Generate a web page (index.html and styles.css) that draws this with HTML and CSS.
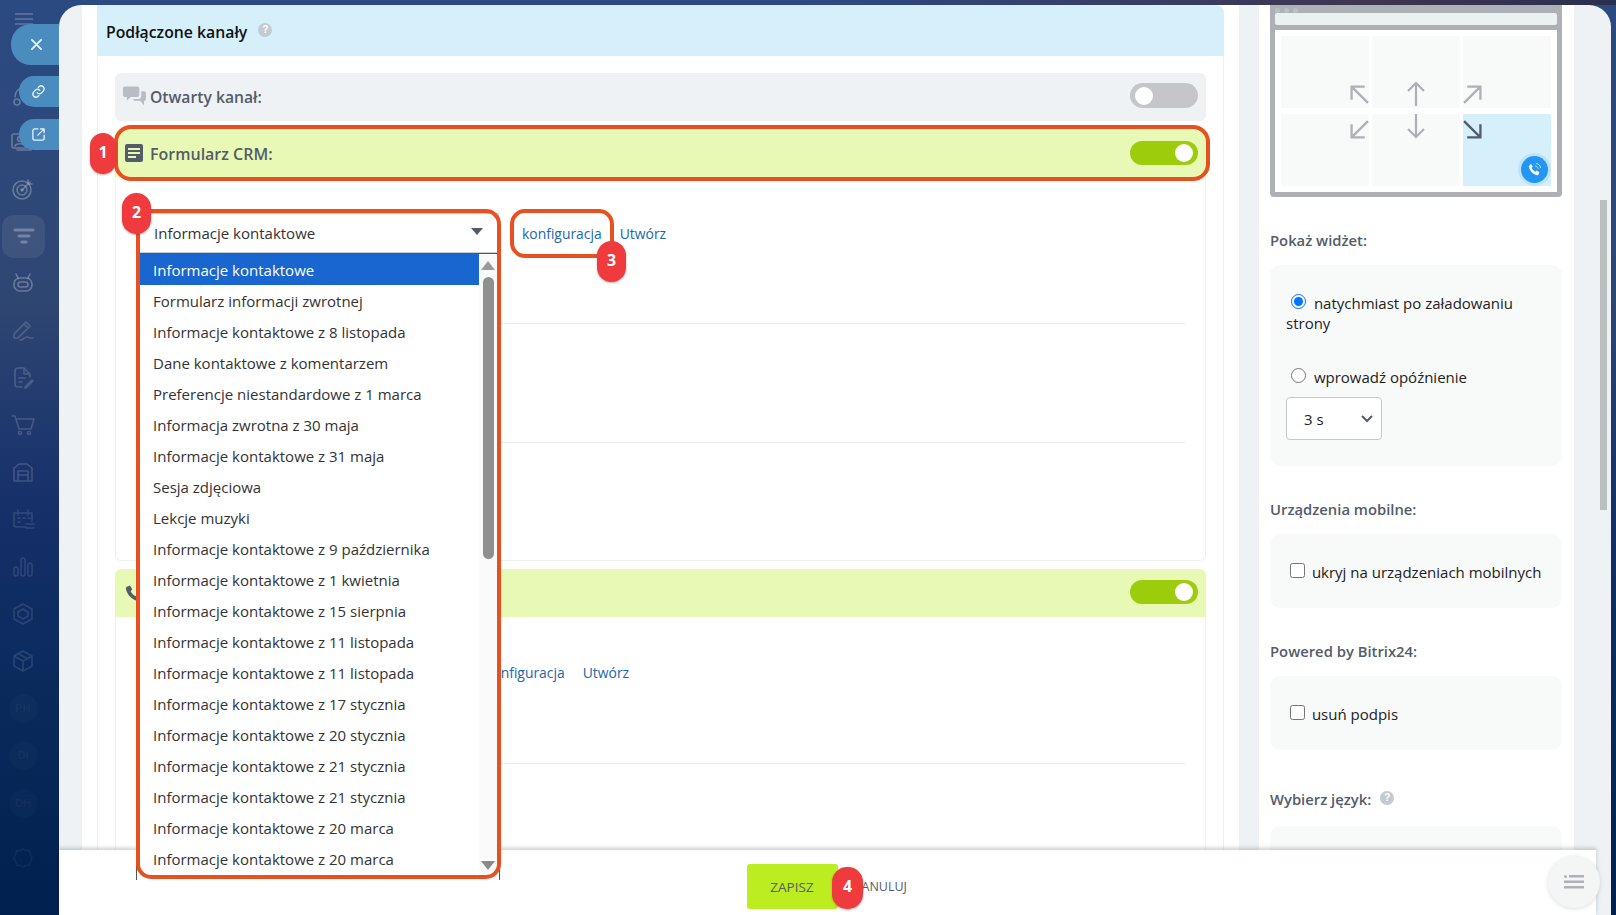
FILE: index.html
```html
<!DOCTYPE html>
<html lang="pl">
<head>
<meta charset="utf-8">
<title>Podłączone kanały</title>
<link rel="stylesheet" href="styles.css">
</head>
<body>
<div class="app">
  <nav class="sidebar">
    <svg class="ham" viewBox="0 0 18 12"><path d="M0 1h18M0 6h18M0 11h18"/></svg>
    <ul class="nav-list">
      <li class="lvl1"><svg viewBox="0 0 24 24"><circle cx="6" cy="19" r="3"/><circle cx="18" cy="19" r="3"/><path d="M4 14c0-6 4-9 8-9s8 3 8 9"/></svg></li>
      <li class="lvl1"><svg viewBox="0 0 24 24"><rect x="1" y="4" width="16" height="14" rx="2"/><circle cx="9" cy="9" r="2.5"/><path d="M4 16c1-3 9-3 10 0M20 8v12H6"/></svg></li>
      <li class="lvl1"><svg viewBox="0 0 24 24"><circle cx="11" cy="13" r="9"/><circle cx="11" cy="13" r="5"/><circle cx="11" cy="13" r="1"/><path d="M11 13l8-8M17 3v4h4"/></svg></li>
      <li class="lvl1 active"><svg viewBox="0 0 24 24"><path class="thick" d="M3 6h18M7 12h10M10 18h4"/></svg></li>
      <li class="lvl1"><svg viewBox="0 0 24 24"><rect x="3" y="7" width="18" height="13" rx="6"/><path d="M7 7L5 3M17 7l2-4"/><rect x="7" y="11" width="10" height="5" rx="2.5"/></svg></li>
      <li class="lvl2"><svg viewBox="0 0 24 24"><path d="M3 16L15 4l4 4L7 20H3zM13 6l4 4M9 22c4 0 4-3 7-3s2 2 6 1"/></svg></li>
      <li class="lvl2"><svg viewBox="0 0 24 24"><path d="M11 21H7a3 3 0 0 1-3-3V5a3 3 0 0 1 3-3h6l6 6v3M13 2v6h6M8 12h6M8 16h3M14 21l7-7 1 1-7 7h-1z"/></svg></li>
      <li class="lvl2"><svg viewBox="0 0 24 24"><path d="M1 3h3l4 13h12l3-10H5"/><circle cx="9" cy="20" r="1.5"/><circle cx="18" cy="20" r="1.5"/></svg></li>
      <li class="lvl2"><svg viewBox="0 0 24 24"><path d="M3 21V8l5-4h8l5 4v13zM7 21V11h10v10M7 15h10"/></svg></li>
      <li class="lvl3"><svg viewBox="0 0 24 24"><path d="M15 20H5a2 2 0 0 1-2-2V6h18v8M7 3v5M17 3v5M7 11h2M12 11h2M17 11h2M7 15h2M15 17h8M15 21h8"/></svg></li>
      <li class="lvl3"><svg viewBox="0 0 24 24"><rect x="3" y="12" width="4" height="9" rx="2"/><rect x="10" y="3" width="4" height="18" rx="2"/><rect x="17" y="8" width="4" height="13" rx="2"/></svg></li>
      <li class="lvl3"><svg viewBox="0 0 24 24"><path d="M12 2l9 5v10l-9 5-9-5V7z"/><path d="M12 7l5 3v4l-5 3-5-3v-4z"/></svg></li>
      <li class="lvl3"><svg viewBox="0 0 24 24"><path d="M12 2l9 5v10l-9 5-9-5V7zM3 7l9 5 9-5M12 12v10M7 4.500l9 5"/></svg></li>
      <li class="lvl4"><span class="avatar">PH</span></li>
      <li class="lvl4"><span class="avatar">DI</span></li>
      <li class="lvl4"><span class="avatar">DH</span></li>
    </ul>
    <svg class="gear lvl4" viewBox="0 0 24 24"><path d="M12 2l3 2 4 0 1 4 2 4-2 4-1 4-4 0-3 2-3-2-4 0-1-4-2-4 2-4 1-4 4 0z"/></svg>
  </nav>

  <div class="slider">
    <div class="slider-body">
      <main class="main-col">
        <div class="section-head">
          <h2 class="section-title">Podłączone kanały</h2>
          <span class="help">?</span>
        </div>
        <div class="section-body">
          <div class="channel channel-off">
            <svg class="ch-icon" viewBox="0 0 24 20"><path d="M2 0h13a2 2 0 0 1 2 2v7a2 2 0 0 1-2 2H8l-4 4v-4H2a2 2 0 0 1-2-2V2a2 2 0 0 1 2-2z"/><path d="M19 5h3a2 2 0 0 1 2 2v6a2 2 0 0 1-2 2v5l-4-5h-6l-2-2h6a3 3 0 0 0 3-3z"/></svg>
            <span class="ch-name">Otwarty kanał:</span>
            <span class="toggle toggle-off"></span>
          </div>
          <div class="channel channel-on">
            <svg class="ch-icon ch-icon-dark" viewBox="0 0 18 18"><path fill-rule="evenodd" d="M2 0h14a2 2 0 0 1 2 2v14a2 2 0 0 1-2 2H2a2 2 0 0 1-2-2V2a2 2 0 0 1 2-2zM3 4v2h12V4zM3 8v2h12V8zM3 12v2h8v-2z"/></svg>
            <span class="ch-name ch-name-form">Formularz CRM:</span>
            <span class="toggle toggle-on"></span>
          </div>
          <div class="channel-panel panel-crm">
            <div class="select-row">
              <div class="fake-select select-wide"><span>Informacje kontaktowe</span><i class="caret"></i></div>
              <a class="link">konfiguracja</a>
              <a class="link">Utwórz</a>
            </div>
            <hr class="divider divider-a">
            <hr class="divider divider-b">
          </div>
          <div class="channel channel-on">
            <svg class="ch-icon ch-icon-dark" viewBox="0 0 24 24"><path d="M6.600 2l3 5-2 2.500c1 2.500 4 5.500 6.900 6.900L17 14.400l5 3-1.500 4c-.5 1-1.500 1.600-3 1.300C9.500 21 3 14.500 1.300 6.500 1 5 1.600 4 2.600 3.500z"/></svg>
            <span class="toggle toggle-on toggle-second"></span>
          </div>
          <div class="channel-panel panel-phone">
            <div class="select-row">
              <div class="fake-select select-narrow"></div>
              <a class="link">konfiguracja</a>
              <a class="link">Utwórz</a>
            </div>
            <hr class="divider divider-c">
          </div>
        </div>
      </main>

      <aside class="side-col">
        <div class="preview">
          <div class="preview-top">
            <div class="dots"><i></i><i></i><i></i></div>
            <div class="urlbar"></div>
          </div>
          <div class="preview-grid">
            <div class="cell cell-br"><svg viewBox="0 0 18 18"><path d="M17 17L2 2M1.500 14V1.500H14"/></svg></div>
            <div class="cell cell-bc"><svg class="tall" viewBox="0 0 18 25"><path d="M9 25V2M1 10l8-8 8 8"/></svg></div>
            <div class="cell cell-bl"><svg viewBox="0 0 18 18"><path d="M1 17L16 2M4 1.500h12.500V14"/></svg></div>
            <div class="cell cell-tr"><svg viewBox="0 0 18 18"><path d="M17 1L2 16M1.500 4v12.500H14"/></svg></div>
            <div class="cell cell-tc"><svg class="tall" viewBox="0 0 18 25"><path d="M9 0v23M1 15l8 8 8-8"/></svg></div>
            <div class="cell cell-tl cell-active"><svg viewBox="0 0 18 18"><path d="M1 1l15 15M4 16.500h12.500V4"/></svg>
              <span class="call-btn"><svg viewBox="0 0 24 24"><path d="M7 4l2.500 4-1.600 2c.8 2 3 4.200 5.100 5.100l2-1.600 4 2.500-1.200 3c-.4.800-1.200 1.200-2.300 1C10 18.600 5.400 14 4 8.500c-.2-1.100.2-1.900 1-2.300z"/><path class="waves" d="M13 7c2 0 4 2 4 4M14 3.500c3.500 0 6.500 3 6.500 6.500"/></svg></span>
            </div>
          </div>
        </div>

        <h3 class="opt-label label-first">Pokaż widżet:</h3>
        <div class="opt-panel panel-show">
          <label class="radio-line"><input type="radio" name="show" checked> natychmiast po załadowaniu strony</label>
          <label class="radio-line radio-second"><input type="radio" name="show"> wprowadź opóźnienie</label>
          <div class="delay-select"><span>3 s</span><svg viewBox="0 0 12 8"><path d="M1 1l5 5 5-5"/></svg></div>
        </div>

        <h3 class="opt-label">Urządzenia mobilne:</h3>
        <div class="opt-panel panel-check">
          <label class="check-line"><input type="checkbox"> ukryj na urządzeniach mobilnych</label>
        </div>

        <h3 class="opt-label">Powered by Bitrix24:</h3>
        <div class="opt-panel panel-check">
          <label class="check-line"><input type="checkbox"> usuń podpis</label>
        </div>

        <h3 class="opt-label label-lang">Wybierz język: <span class="help help-lang">?</span></h3>
        <div class="opt-panel panel-lang"></div>
      </aside>
    </div>

    <div class="page-scroll"></div>

    <footer class="footer">
      <button class="btn-save">ZAPISZ</button>
      <button class="btn-cancel">ANULUJ</button>
    </footer>
    <button class="fab"><svg viewBox="0 0 20 14"><circle cx="1.500" cy="1.500" r="1.500"/><path d="M5 0h15v2.500H5zM0 5.500h20V8H0zM0 11h20v2.500H0z"/></svg></button>
  </div>
</div>

<div class="pill pill-close"><svg viewBox="0 0 12 12"><path d="M1 1l10 10M11 1L1 11"/></svg></div>
<div class="pill pill-link"><svg viewBox="0 0 24 24"><path d="M10 14a5 5 0 0 0 7 0l3-3a5 5 0 0 0-7-7l-1.500 1.500M14 10a5 5 0 0 0-7 0l-3 3a5 5 0 0 0 7 7l1.500-1.500"/></svg></div>
<div class="pill pill-open"><svg viewBox="0 0 24 24"><path d="M11 3H6a3 3 0 0 0-3 3v12a3 3 0 0 0 3 3h12a3 3 0 0 0 3-3v-5M15 3h6v6M21 3L11 13"/></svg></div>

<div class="dropdown">
  <ul class="dropdown-list">
    <li class="selected">Informacje kontaktowe</li>
    <li>Formularz informacji zwrotnej</li>
    <li>Informacje kontaktowe z 8 listopada</li>
    <li>Dane kontaktowe z komentarzem</li>
    <li>Preferencje niestandardowe z 1 marca</li>
    <li>Informacja zwrotna z 30 maja</li>
    <li>Informacje kontaktowe z 31 maja</li>
    <li>Sesja zdjęciowa</li>
    <li>Lekcje muzyki</li>
    <li>Informacje kontaktowe z 9 października</li>
    <li>Informacje kontaktowe z 1 kwietnia</li>
    <li>Informacje kontaktowe z 15 sierpnia</li>
    <li>Informacje kontaktowe z 11 listopada</li>
    <li>Informacje kontaktowe z 11 listopada</li>
    <li>Informacje kontaktowe z 17 stycznia</li>
    <li>Informacje kontaktowe z 20 stycznia</li>
    <li>Informacje kontaktowe z 21 stycznia</li>
    <li>Informacje kontaktowe z 21 stycznia</li>
    <li>Informacje kontaktowe z 20 marca</li>
    <li>Informacje kontaktowe z 20 marca</li>
  </ul>
  <div class="dd-scroll">
    <i class="dd-up"></i>
    <i class="dd-thumb"></i>
    <i class="dd-down"></i>
  </div>
</div>

<div class="mark mark-1"></div>
<div class="mark mark-2"></div>
<div class="mark mark-3"></div>
<div class="badge badge-1">1</div>
<div class="badge badge-2">2</div>
<div class="badge badge-3">3</div>
<div class="badge badge-4">4</div>
</body>
</html>
```

FILE: styles.css
```css
* { box-sizing: border-box; }
html, body { height: 100%; }
body {
  margin: 0;
  position: relative;
  overflow: hidden;
  font-family: "Open Sans", "Noto Sans", sans-serif;
  font-size: 15px;
  color: #333;
  background: #00214f;
}
.app {
  display: flex;
  height: 915px;
  padding-right: 5px;
  background:
    linear-gradient(90deg, rgba(0,0,0,0) 50%, #3f3550 85%, #2a2f50 100%) top / 100% 5px no-repeat,
    linear-gradient(180deg, #2b4a82 0, #2f4672 33%, #16306a 55%, #0a2a5c 75%, #00214f 100%);
}

/* Sidebar */
.sidebar {
  width: 59px;
  flex: none;
  display: flex;
  flex-direction: column;
  color: #fff;
}
.sidebar svg { fill: none; stroke: currentColor; stroke-width: 1.6; stroke-linecap: round; stroke-linejoin: round; }
.ham { width: 18px; height: 12px; margin: 13px 0 0 15px; opacity: .25; }
.nav-list {
  list-style: none;
  margin: 46px 0 0;
  padding: 0;
}
.nav-list li {
  width: 46px;
  height: 47.3px;
  display: flex;
  align-items: center;
  justify-content: center;
}
.nav-list svg { width: 24px; height: 24px; }
.lvl1 { color: rgba(255,255,255,.28); }
.lvl2 { color: rgba(255,255,255,.17); }
.lvl3 { color: rgba(255,255,255,.12); }
.lvl4 { color: rgba(255,255,255,.05); }
.nav-list li.active {
  background: rgba(255,255,255,.08);
  border-radius: 12px;
  margin-left: 2px;
  width: 43px;
  height: 43px;
  margin-top: 2px;
  margin-bottom: 1.4px;
}
.thick { stroke-width: 3; }
.avatar {
  width: 29px;
  height: 29px;
  border-radius: 50%;
  background: rgba(255,255,255,.02);
  font: bold 11px/29px "Liberation Sans", sans-serif;
  text-align: center;
}
.gear { width: 22px; height: 22px; margin: 20px 0 0 12px; }

/* Slider */
.slider {
  flex: 1;
  margin-top: 5px;
  position: relative;
  background: #eef2f4;
  border-radius: 22px 22px 0 0;
  overflow: hidden;
}
.slider-body {
  display: flex;
  gap: 20px;
  padding-left: 23px;
  align-items: flex-start;
}
.main-col {
  width: 1157px;
  height: 910px;
  flex: none;
  background: #fff;
  padding: 0 15px;
}
.section-head {
  height: 51px;
  background: #d5f0fb;
  border-radius: 0 8px 0 0;
  padding-left: 9px;
  display: flex;
  align-items: center;
  gap: 11px;
}
.section-title {
  margin: 2px 0 0;
  font-size: 15.8px;
  font-weight: 600;
  color: #111;
}
.help {
  width: 14px;
  height: 14px;
  border-radius: 50%;
  background: #c3cad0;
  color: #fff;
  font: bold 10px/14px "Liberation Sans", sans-serif;
  text-align: center;
  margin-top: -2px;
}
.section-body {
  height: 859px;
  border: 1px solid #eef0f2;
  border-width: 0 1px;
  padding: 17px 17px 0;
}
.channel {
  height: 48px;
  display: flex;
  align-items: center;
  padding: 0 8px 0 10px;
  border-radius: 6px;
}
.channel-off { background: #eef2f4; margin-bottom: 8px; }
.channel-on { background: #e8f8b5; border-radius: 6px 6px 0 0; }
.ch-icon { width: 23px; height: 20px; fill: #b9bdc3; flex: none; margin: -2px 2px 0 -2px; }
.ch-icon-dark { width: 18px; height: 18px; fill: #535c69; margin: 0 3px 0 0; }
.ch-name {
  font-size: 15.7px;
  font-weight: 600;
  color: #535c69;
  margin-left: 2px;
}
.ch-name-form { font-size: 16px; margin: 2px 0 0 4px; }
.toggle {
  margin-left: auto;
  width: 68px;
  border-radius: 13px;
  position: relative;
}
.toggle::after {
  content: "";
  position: absolute;
  top: 4px;
  width: 18px;
  height: 18px;
  border-radius: 50%;
  background: #fff;
}
.toggle-off { height: 25px; background: #c4c6ca; margin-top: -4px; }
.toggle-off::after { left: 5px; }
.toggle-on { height: 24px; background: #9dcc0c; }
.toggle-on::after { right: 5px; top: 3px; }
.toggle-second { margin-top: -3px; }
.channel-panel {
  border: 1px solid #eef0f2;
  border-top: 0;
  border-radius: 0 0 6px 6px;
  padding: 36px 20px 0 23px;
  margin-bottom: 8px;
}
.panel-crm { height: 384px; }
.panel-phone { height: 400px; padding-top: 35px; }
.select-row {
  display: flex;
  align-items: center;
  gap: 18px;
  height: 40px;
}
.fake-select {
  height: 40px;
  border: 1px solid #c6cdd3;
  display: flex;
  align-items: center;
  justify-content: space-between;
  padding: 0 15px 0 14px;
  margin-right: 5px;
  color: #333;
}
.select-wide { width: 360px; }
.select-narrow { width: 323px; }
.caret {
  border: 6px solid transparent;
  border-top: 7px solid #535c69;
  border-bottom: 0;
  margin-top: -3px;
}
.link { color: #2067b0; font-size: 13.9px; }
.divider { border: 0; border-top: 1px solid #e8eaec; margin: 0; }
.divider-a { margin-top: 70px; }
.divider-b { margin-top: 118px; }
.divider-c { margin-top: 71px; }

/* Right column */
.side-col {
  width: 315px;
  height: 910px;
  flex: none;
  background: #fff;
  padding: 0 12px 0 11px;
}
.preview {
  height: 192px;
  background: #adb0b5;
  border-radius: 0 0 4px 4px;
  padding: 0 5px 6px;
  display: flex;
  flex-direction: column;
}
.preview-top { height: 25px; flex: none; }
.dots { display: flex; gap: 4px; height: 8px; padding: 3px 0 0 0; }
.dots i { width: 5px; height: 5px; border-radius: 50%; background: #bcc0c3; }
.urlbar { height: 12px; background: #edf0f0; border-radius: 2px; }
.preview-grid {
  flex: 1;
  background: #fff;
  padding: 6px;
  display: grid;
  grid-template-columns: repeat(3, 88px);
  grid-template-rows: 72px 72px;
  column-gap: 3px;
  row-gap: 6px;
}
.cell {
  background: #f8f9f9;
  display: flex;
  position: relative;
}
.cell svg { width: 19px; height: 19px; fill: none; stroke: #adb0b5; stroke-width: 2.2; }
.cell svg.tall { width: 18px; height: 25px; }
.cell-br { align-items: flex-end; justify-content: flex-end; }
.cell-bc { align-items: flex-end; justify-content: center; padding-bottom: 2px; }
.cell-bl { align-items: flex-end; justify-content: flex-start; }
.cell-tr { align-items: flex-start; justify-content: flex-end; padding-top: 6px; }
.cell-tc { align-items: flex-start; justify-content: center; }
.cell-tl { align-items: flex-start; justify-content: flex-start; padding-top: 6px; }
.cell-br, .cell-bl { padding-bottom: 4px; }
.cell-active { background: #d5f0fb; }
.cell-active > svg { stroke: #535c69; }
.call-btn {
  position: absolute;
  right: 3px;
  bottom: 3px;
  width: 27px;
  height: 27px;
  border-radius: 50%;
  background: #2196f3;
  box-shadow: 0 0 0 3px #bfe3f8;
  display: flex;
  align-items: center;
  justify-content: center;
}
.cell .call-btn svg { width: 17px; height: 17px; fill: #fff; stroke: none; }
.cell .call-btn .waves { fill: none; stroke: #fff; stroke-width: 1; }
.opt-label {
  margin: 33px 0 15px;
  font-size: 14.8px;
  line-height: 20px;
  font-weight: 600;
  color: #535c69;
}
.label-lang { margin: 39px 0 17px; display: flex; align-items: center; gap: 9px; }
.help-lang { margin-top: -2px; }
.opt-panel {
  background: #f8f9f9;
  border-radius: 10px;
  color: #222;
}
.panel-show { height: 201px; padding: 28px 16px 0; }
.radio-line { display: block; line-height: 20px; }
.radio-line input {
  width: 15px;
  height: 15px;
  margin: 0 4px 0 5px;
  vertical-align: 0;
}
.radio-second { margin-top: 34px; }
.delay-select {
  width: 96px;
  height: 43px;
  margin-top: 10px;
  background: #fff;
  border: 1px solid #c6c9cc;
  border-radius: 4px;
  padding: 0 8px 0 17px;
  display: flex;
  align-items: center;
  justify-content: space-between;
}
.delay-select svg { width: 12px; height: 8px; fill: none; stroke: #535c69; stroke-width: 2; }
.panel-check {
  height: 74px;
  padding-left: 20px;
  display: flex;
  align-items: center;
}
.check-line { line-height: 22px; margin-top: 1px; }
.check-line input { width: 15px; height: 15px; margin: 0 3px 0 0; vertical-align: 0; }
.panel-lang { height: 100px; }

.page-scroll {
  position: absolute;
  right: 4px;
  top: 195px;
  width: 7px;
  height: 310px;
  background: #bcbfc0;
}

/* Footer */
.footer {
  position: absolute;
  left: 0;
  right: 15px;
  bottom: 0;
  height: 65px;
  background: #fff;
  box-shadow: 0 -2px 4px rgba(80,90,100,.3);
  display: flex;
  align-items: center;
  justify-content: center;
  gap: 24px;
  padding: 8px 2px 0 0;
}
.btn-save, .btn-cancel {
  border: 0;
  font-family: "Open Sans", sans-serif;
  font-size: 13.5px;
  color: #535c69;
  padding: 0;
}
.btn-save {
  width: 91px;
  height: 45px;
  background: #bbed21;
  border-radius: 3px;
}
.btn-cancel { background: none; width: 45px; font-size: 12.5px; }
.fab {
  position: absolute;
  left: 1489px;
  top: 851px;
  width: 52px;
  height: 52px;
  border: 0;
  border-radius: 50%;
  background: #f4f5f5;
  box-shadow: 0 1px 4px rgba(80,90,100,.2);
  display: flex;
  align-items: center;
  justify-content: center;
}
.fab svg { width: 20px; height: 14px; fill: #aeb2b8; }

/* Overlay pills */
.pill {
  position: absolute;
  left: 19px;
  width: 40px;
  height: 31px;
  background: #4b8cc0;
  border-radius: 15px 0 0 15px;
  display: flex;
  align-items: center;
  justify-content: center;
}
.pill svg { width: 15px; height: 15px; fill: none; stroke: #fff; stroke-width: 2; stroke-linecap: round; stroke-linejoin: round; opacity: .9; }
.pill-close { left: 11px; top: 24px; width: 48px; height: 41px; border-radius: 20px 0 0 20px; padding-left: 3px; background: #4b8cbf; }
.pill-close svg { width: 11px; height: 11px; }
.pill-link { top: 76px; padding-right: 2px; }
.pill-open { top: 119px; padding-right: 2px; }

/* Dropdown */
.dropdown {
  position: absolute;
  left: 136px;
  top: 253px;
  width: 364px;
  height: 627px;
  background: #fff;
  border: 1px solid #555;
  border-width: 1px 1px 0;
  overflow: hidden;
}
.dropdown-list {
  list-style: none;
  margin: 0;
  padding: 0 0 0 3px;
  width: 343px;
}
.dropdown-list li {
  height: 31px;
  line-height: 32px;
  padding-left: 13px;
  color: #333;
  white-space: nowrap;
}
.dropdown-list .selected { background: #1a66d0; color: #fff; }
.dd-scroll {
  position: absolute;
  top: 0;
  right: 2px;
  bottom: 0;
  width: 18px;
  background: #fafafa;
}
.dd-up, .dd-down, .dd-thumb { position: absolute; display: block; }
.dd-up { left: 2px; top: 7px; border: 7px solid transparent; border-bottom: 9px solid #9a9a9a; border-top: 0; }
.dd-down { left: 2px; bottom: 10px; border: 7px solid transparent; border-top: 9px solid #8a8a8a; border-bottom: 0; }
.dd-thumb { left: 4px; top: 23px; width: 11px; height: 282px; border-radius: 6px; background: #8f8f8f; }

/* Annotations */
.mark {
  position: absolute;
  border: 4px solid #e8501f;
  border-radius: 15px;
}
.mark-1 { left: 114px; top: 125px; width: 1096px; height: 56px; border-radius: 17px; }
.mark-2 { left: 136px; top: 209px; width: 365px; height: 670px; }
.mark-3 { left: 510px; top: 209px; width: 104px; height: 49px; }
.badge {
  position: absolute;
  width: 29px;
  height: 41px;
  border-radius: 15px;
  background: #ef3b3e;
  color: #fff;
  font-family: "Open Sans", sans-serif;
  font-size: 16px;
  font-weight: 700;
  line-height: 39px;
  text-align: center;
  box-shadow: 0 1px 2px rgba(120,40,40,.4);
}
.badge-1 { left: 90px; top: 133px; width: 26px; }
.badge-2 { left: 122px; top: 193px; }
.badge-3 { left: 597px; top: 241px; }
.badge-4 { left: 832px; top: 867px; width: 31px; height: 42px; }
```
